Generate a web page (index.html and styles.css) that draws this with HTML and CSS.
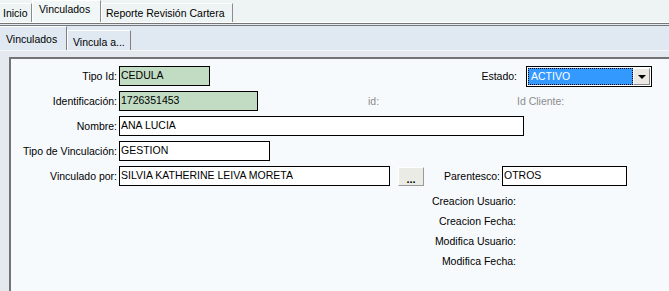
FILE: index.html
```html
<!DOCTYPE html>
<html lang="es">
<head>
  <meta charset="UTF-8">
  <title>Vinculados</title>
  <link rel="stylesheet" href="styles.css">
</head>
<body>
  <div class="tabbar">
    <div class="tab tab-inicio">Inicio</div>
    <div class="tab tab-active tab-vinc">Vinculados</div>
    <div class="tab tab-rep">Reporte Revisión Cartera</div>
  </div>
  <div class="subbar">
    <div class="subtab subtab-active">Vinculados</div>
    <div class="subtab">Vincula a...</div>
  </div>
  <div class="content">
    <div class="panel">
      <div class="row">
        <label class="lbl">Tipo Id:</label>
        <input class="field green w-tipo" value="CEDULA" readonly>
        <label class="lbl-right w-estado">Estado:</label>
        <div class="select">
          <div class="select-value">ACTIVO</div>
          <div class="select-arrow"><span class="tri"></span></div>
        </div>
      </div>
      <div class="row">
        <label class="lbl">Identificación:</label>
        <input class="field green w-ident" value="1726351453" readonly>
        <span class="muted w-id">id:</span>
        <span class="muted">Id Cliente:</span>
      </div>
      <div class="row">
        <label class="lbl">Nombre:</label>
        <input class="field w-nombre" value="ANA LUCIA" readonly>
      </div>
      <div class="row">
        <label class="lbl">Tipo de Vinculación:</label>
        <input class="field w-tvinc" value="GESTION" readonly>
      </div>
      <div class="row">
        <label class="lbl">Vinculado por:</label>
        <input class="field w-vpor" value="SILVIA KATHERINE LEIVA MORETA" readonly>
        <button class="dots" type="button">...</button>
        <label class="lbl-right w-paren">Parentesco:</label>
        <input class="field w-paren-in" value="OTROS" readonly>
      </div>
      <div class="audit">
        <div class="audit-row">Creacion Usuario:</div>
        <div class="audit-row">Creacion Fecha:</div>
        <div class="audit-row">Modifica Usuario:</div>
        <div class="audit-row">Modifica Fecha:</div>
      </div>
    </div>
  </div>
</body>
</html>
```

FILE: styles.css
```css
body {
  margin: 0;
  font-family: "Liberation Sans", Arial, sans-serif;
  font-size: 10.5px;
  color: #000;
  background-color: #e2e9f0;
  height: 291px;
  overflow: hidden;
}

/* top tabs */
.tabbar {
  display: flex;
  align-items: flex-end;
  height: 22px;
  background-color: #eef4f4;
  border-bottom: 1px solid #fff;
}
.tab {
  box-sizing: border-box;
  height: 19px;
  padding-top: 3px;
  border-right: 1px solid #8c8c8c;
  border-left: 1px solid #fff;
  border-top: 1px solid #fff;
  white-space: nowrap;
}
.tab-inicio { width: 32px; padding-left: 3px; border-left: none; }
.tab-vinc { width: 69px; padding-left: 6px; }
.tab-rep { width: 132px; padding-left: 4px; }
.tab-active {
  height: 22px;
  padding-top: 2px;
  background-color: #f1f6f6;
}

/* sub tabs */
.subbar {
  display: flex;
  align-items: flex-end;
  height: 24px;
  border-top: 3px double #767676;
  background-color: #e0e8f2;
  border-bottom: 1px solid #f4f6f8;
}
.subtab {
  box-sizing: border-box;
  height: 20px;
  width: 64px;
  padding: 5px 0 0 5px;
  border-left: 1px solid #fff;
  border-right: 1px solid #808080;
  border-top: 1px solid #fff;
  white-space: nowrap;
}
.subtab-active {
  height: 24px;
  width: 67px;
  padding: 6px 0 0 6px;
  border-left: none;
}

/* panel */
.content {
  padding: 6px 0 0 9px;
  background-color: #e3e9ee;
}
.panel {
  box-sizing: border-box;
  height: 234px;
  padding-top: 7px;
  background-color: #f7fafd;
  border-left: 2px solid #747474;
  border-top: 2px solid #747474;
}
.row {
  display: flex;
  align-items: center;
  height: 20px;
  margin-bottom: 5px;
}
.row:nth-child(5) { margin-top: 1px; }
.lbl {
  width: 106px;
  margin-right: 2px;
  text-align: right;
  white-space: nowrap;
}
.lbl-right {
  text-align: right;
  white-space: nowrap;
}
.field {
  box-sizing: border-box;
  height: 20px;
  padding: 0 1px 2px;
  border: 1px solid #000;
  background-color: #fff;
  font-family: inherit;
  font-size: 10.5px;
  color: #000;
  outline: none;
}
.green { background-color: #c1dcc2; }
.w-tipo { width: 91px; }
.w-estado { width: 307px; margin-right: 9px; }
.w-ident { width: 139px; }
.w-id { width: 149px; margin-left: 110px; }
.w-nombre { width: 405px; }
.w-tvinc { width: 151px; }
.w-vpor { width: 271px; }
.w-paren { width: 76px; margin-right: 2px; }
.w-paren-in { width: 125px; }
.muted { color: #8c8c8c; }

/* estado select */
.select {
  box-sizing: border-box;
  display: flex;
  width: 126px;
  height: 21px;
  padding: 1px;
  border: 1px solid #000;
  background-color: #fff;
}
.select-value {
  flex: 1;
  padding-left: 2px;
  line-height: 15px;
  color: #fff;
  background-color: #3399ff;
  border: 1px dotted #000;
}
.select-arrow {
  box-sizing: border-box;
  width: 17px;
  display: flex;
  align-items: center;
  justify-content: center;
  background-color: #ece9e4;
  border-left: 1px solid #fff;
  border-top: 1px solid #fff;
  border-right: 1px solid #8a8a8a;
  border-bottom: 1px solid #8a8a8a;
}
.tri {
  width: 0;
  height: 0;
  border-left: 4px solid transparent;
  border-right: 4px solid transparent;
  border-top: 4px solid #000;
  margin-top: 1px;
}

/* browse button */
.dots {
  box-sizing: border-box;
  width: 26px;
  height: 19px;
  margin-left: 8px;
  padding: 6px 0 0;
  font-family: inherit;
  font-size: 11px;
  font-weight: bold;
  line-height: 10px;
  background-color: #ebebe6;
  border-top: 1px solid #fff;
  border-left: 1px solid #fff;
  border-right: 1px solid #9a9a9a;
  border-bottom: 1px solid #9a9a9a;
}

/* audit labels */
.audit { margin-top: 5px; }
.audit-row {
  width: 505px;
  height: 20px;
  line-height: 20px;
  text-align: right;
}
```
